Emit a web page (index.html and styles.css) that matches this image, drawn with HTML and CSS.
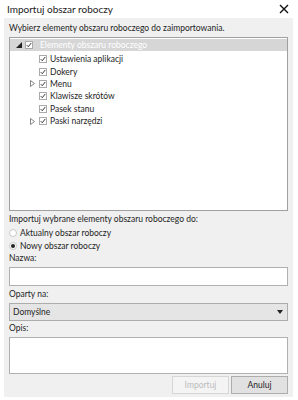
FILE: index.html
```html
<!DOCTYPE html>
<html>
<head>
<meta charset="utf-8">
<link rel="stylesheet" href="styles.css">
</head>
<body>
<div class="window">
  <div class="titlebar">
    <span class="title">Importuj obszar roboczy</span>
    <svg class="close" width="10" height="10" viewBox="0 0 10 10"><path d="M1 1L9 9M9 1L1 9" stroke="#111" stroke-width="1.4"/></svg>
  </div>
  <div class="panel">
    <div class="label">Wybierz elementy obszaru roboczego do zaimportowania.</div>
    <div class="tree">
      <div class="row root">
        <svg class="exp" width="6" height="6" viewBox="0 0 6 6"><path d="M6 0V6H0Z" fill="#222"/></svg>
        <span class="cb"><svg width="8" height="8" viewBox="0 0 8 8"><path d="M1 4.2L3 6.3L7 1.3" fill="none" stroke="#222" stroke-width="1.2"/></svg></span>
        <span class="rtext">Elementy obszaru roboczego</span>
      </div>
      <div class="children">
        <div class="row child"><span class="expsp"></span><span class="cb"><svg width="8" height="8" viewBox="0 0 8 8"><path d="M1 4.2L3 6.3L7 1.3" fill="none" stroke="#222" stroke-width="1.2"/></svg></span><span>Ustawienia aplikacji</span></div>
        <div class="row child"><span class="expsp"></span><span class="cb"><svg width="8" height="8" viewBox="0 0 8 8"><path d="M1 4.2L3 6.3L7 1.3" fill="none" stroke="#222" stroke-width="1.2"/></svg></span><span>Dokery</span></div>
        <div class="row child"><span class="expsp"><svg width="5" height="7" viewBox="0 0 5 7"><path d="M0.5 0.5L4.5 3.5L0.5 6.5Z" fill="none" stroke="#777" stroke-width="0.9"/></svg></span><span class="cb"><svg width="8" height="8" viewBox="0 0 8 8"><path d="M1 4.2L3 6.3L7 1.3" fill="none" stroke="#222" stroke-width="1.2"/></svg></span><span>Menu</span></div>
        <div class="row child"><span class="expsp"></span><span class="cb"><svg width="8" height="8" viewBox="0 0 8 8"><path d="M1 4.2L3 6.3L7 1.3" fill="none" stroke="#222" stroke-width="1.2"/></svg></span><span>Klawisze skrótów</span></div>
        <div class="row child"><span class="expsp"></span><span class="cb"><svg width="8" height="8" viewBox="0 0 8 8"><path d="M1 4.2L3 6.3L7 1.3" fill="none" stroke="#222" stroke-width="1.2"/></svg></span><span>Pasek stanu</span></div>
        <div class="row child"><span class="expsp"><svg width="5" height="7" viewBox="0 0 5 7"><path d="M0.5 0.5L4.5 3.5L0.5 6.5Z" fill="none" stroke="#777" stroke-width="0.9"/></svg></span><span class="cb"><svg width="8" height="8" viewBox="0 0 8 8"><path d="M1 4.2L3 6.3L7 1.3" fill="none" stroke="#222" stroke-width="1.2"/></svg></span><span>Paski narzędzi</span></div>
      </div>
    </div>
    <div class="label l2">Importuj wybrane elementy obszaru roboczego do:</div>
    <div class="radio"><span class="rb"></span>Aktualny obszar roboczy</div>
    <div class="radio"><span class="rb on"></span>Nowy obszar roboczy</div>
    <div class="label">Nazwa:</div>
    <div class="input"></div>
    <div class="label">Oparty na:</div>
    <div class="select"><span>Domyślne</span><svg width="6" height="4" viewBox="0 0 6 4"><path d="M0 0H6L3 4Z" fill="#222"/></svg></div>
    <div class="label">Opis:</div>
    <div class="textarea"></div>
    <div class="buttons">
      <div class="btn disabled">Importuj</div>
      <div class="btn">Anuluj</div>
    </div>
  </div>
</div>
</body>
</html>
```
FILE: styles.css
```css
html, body {
  margin: 0;
  padding: 0;
  background: #fff;
}
body {
  font-family: Lato, "Open Sans", sans-serif;
  font-size: 8.5px;
  color: #1e1e1e;
  width: 298px;
  height: 400px;
  overflow: hidden;
}
.window {
  display: flex;
  flex-direction: column;
  height: 400px;
}
.titlebar {
  height: 18px;
  display: flex;
  align-items: center;
  justify-content: space-between;
  padding: 0 9px 0 7px;
  flex: none;
}
.title {
  font-size: 10px;
  color: #222;
}
.close { display: block; }
.panel {
  background: #f0f0f0;
  margin: 0 5px 5px 4px;
  padding: 4px 5px 3px 5px;
  flex: 1;
  display: flex;
  flex-direction: column;
}
.label {
  height: 13px;
  line-height: 13px;
  white-space: nowrap;
}
.l2 { margin-top: 2px; }
.tree {
  margin-top: 2px;
  height: 171px;
  background: #fff;
  border: 1px solid #a0a0a0;
  padding-top: 1px;
  flex: none;
}
.children { margin-top: 2px; }
.row {
  height: 12.4px;
  display: flex;
  align-items: center;
  white-space: nowrap;
}
.root {
  height: 12px;
  background: #d6d6d6;
  padding-left: 6px;
}
.root .exp { margin-right: 3px; }
.rtext { color: #fff; margin-left: 7px; }
.child { padding-left: 20px; }
.child .cb { margin-right: 3px; }
.expsp {
  width: 9px;
  height: 8px;
  display: flex;
  align-items: center;
  margin-right: 0;
}
.cb {
  width: 8px;
  height: 8px;
  box-sizing: border-box;
  border: 1px solid #aaa;
  background: #fff;
  display: flex;
  align-items: center;
  justify-content: center;
}
.cb svg { display: block; }
.radio {
  height: 13px;
  display: flex;
  align-items: center;
}
.rb {
  width: 8px;
  height: 8px;
  box-sizing: border-box;
  border: 1px solid #c8c8c8;
  border-radius: 50%;
  background: #fff;
  margin-right: 3px;
  position: relative;
}
.rb.on::after {
  content: "";
  position: absolute;
  left: 1px;
  top: 1px;
  width: 4px;
  height: 4px;
  border-radius: 50%;
  background: #222;
}
.input {
  height: 17px;
  background: #fff;
  border: 1px solid #b0b0b0;
  margin-top: 2px;
  margin-bottom: 2px;
}
.select {
  height: 16px;
  background: #e5e5e5;
  border: 1px solid #adadad;
  margin-top: 2px;
  margin-bottom: 1px;
  display: flex;
  align-items: center;
  justify-content: space-between;
  padding: 0 4px 0 3px;
}
.textarea {
  height: 35px;
  background: #fff;
  border: 1px solid #b0b0b0;
  margin-top: 2px;
}
.buttons {
  display: flex;
  justify-content: flex-end;
  gap: 2px;
  margin-top: 2px;
}
.btn {
  width: 55px;
  height: 16px;
  border: 1px solid #adadad;
  background: #e1e1e1;
  display: flex;
  align-items: center;
  justify-content: center;
}
.btn.disabled {
  background: #f4f4f4;
  border-color: #d6d6d6;
  color: #bcbcbc;
}
```
